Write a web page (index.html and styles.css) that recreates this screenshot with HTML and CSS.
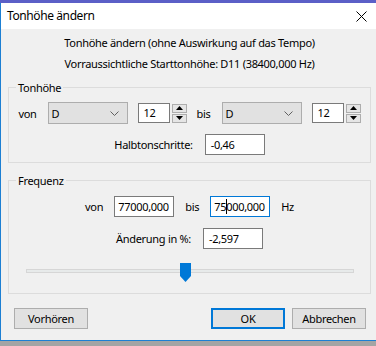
FILE: index.html
```html
<!DOCTYPE html>
<html>
<head>
<meta charset="utf-8">
<link rel="stylesheet" href="styles.css">
</head>
<body>
<div class="strip"></div>
<div class="dialog">
  <div class="titlebar">
    <span class="title">Tonhöhe ändern</span>
    <svg class="close" width="11" height="11" viewBox="0 0 11 11"><path d="M0.5 0.5 L10.5 10.5 M10.5 0.5 L0.5 10.5" stroke="#000" stroke-width="1" fill="none"/></svg>
  </div>
  <div class="content">
    <div class="info">
      <div>Tonhöhe ändern (ohne Auswirkung auf das Tempo)</div>
      <div>Vorraussichtliche Starttonhöhe: D11 (38400,000 Hz)</div>
    </div>
    <div class="group g-pitch">
      <span class="legend">Tonhöhe</span>
      <div class="row row-pitch">
        <span class="lbl lbl-von">von</span>
        <div class="combo"><span>D</span><svg width="9" height="5" viewBox="0 0 9 5"><path d="M0.5 0.5 L4.5 4.5 L8.5 0.5" stroke="#606060" fill="none"/></svg></div>
        <div class="spin-input">12</div>
        <div class="spin-btns">
          <div class="sbtn"><svg width="7" height="4" viewBox="0 0 7 4"><path d="M3.5 0 L7 4 L0 4 Z" fill="#000"/></svg></div>
          <div class="sbtn"><svg width="7" height="4" viewBox="0 0 7 4"><path d="M0 0 L7 0 L3.5 4 Z" fill="#000"/></svg></div>
        </div>
        <span class="lbl lbl-bis">bis</span>
        <div class="combo"><span>D</span><svg width="9" height="5" viewBox="0 0 9 5"><path d="M0.5 0.5 L4.5 4.5 L8.5 0.5" stroke="#606060" fill="none"/></svg></div>
        <div class="spin-input">12</div>
        <div class="spin-btns">
          <div class="sbtn"><svg width="7" height="4" viewBox="0 0 7 4"><path d="M3.5 0 L7 4 L0 4 Z" fill="#000"/></svg></div>
          <div class="sbtn"><svg width="7" height="4" viewBox="0 0 7 4"><path d="M0 0 L7 0 L3.5 4 Z" fill="#000"/></svg></div>
        </div>
      </div>
      <div class="row row-semi">
        <span class="lbl">Halbtonschritte:</span>
        <div class="textbox">-0,46</div>
      </div>
    </div>
    <div class="group g-freq">
      <span class="legend">Frequenz</span>
      <div class="row row-freq">
        <span class="lbl">von</span>
        <div class="textbox tb-freq">77000,000</div>
        <span class="lbl">bis</span>
        <div class="textbox tb-freq focused">75<span class="caret"></span>000,000</div>
        <span class="lbl">Hz</span>
      </div>
      <div class="row row-pct">
        <span class="lbl">Änderung in %:</span>
        <div class="textbox">-2,597</div>
      </div>
      <div class="slider">
        <div class="track"></div>
        <svg class="thumb" width="11" height="19" viewBox="0 0 11 19"><path d="M0 0 H11 V13 L5.5 19 L0 13 Z" fill="#0078d7"/></svg>
      </div>
    </div>
    <div class="buttons">
      <div class="btn">Vorhören</div>
      <div class="spacer"></div>
      <div class="btn btn-default">OK</div>
      <div class="btn">Abbrechen</div>
    </div>
  </div>
</div>
</body>
</html>
```
FILE: styles.css
```css
html, body {
  margin: 0;
  padding: 0;
  width: 376px;
  height: 346px;
  overflow: hidden;
  background: #a4a4a4;
}
body {
  font-family: "Noto Sans", "Open Sans", sans-serif;
  font-size: 11px;
  letter-spacing: -0.3px;
  color: #000;
}
.strip {
  height: 3px;
  background: #5b5fc7;
}
.dialog {
  width: 377px;
  border-left: 1px solid #1c7fd3;
  border-bottom: 1px solid #1c7fd3;
  background: #f0f0f0;
}
.titlebar {
  height: 26px;
  background: #fff;
  display: flex;
  align-items: center;
  position: relative;
}
.title {
  font-size: 12px;
  letter-spacing: -0.4px;
  margin-left: 6px;
  line-height: 26px;
}
.close {
  position: absolute;
  left: 355px;
  top: 8px;
}
.content {
  height: 311px;
  display: flex;
  flex-direction: column;
}
.info {
  padding-top: 3px;
  text-align: center;
  line-height: 21px;
}
.group {
  position: relative;
  margin: 0 7px;
  border: 1px solid #dcdcdc;
  display: flex;
  flex-direction: column;
}
.g-pitch {
  margin-top: 13px;
  padding: 14px 0 7px;
}
.g-freq {
  margin-top: 17px;
  padding: 15px 0 11px;
}
.legend {
  position: absolute;
  top: -8px;
  left: 7px;
  padding: 0 2px;
  line-height: 15px;
  background: #f0f0f0;
}
.row {
  display: flex;
  align-items: center;
  justify-content: center;
}
.row-pitch { height: 22px; }
.row-semi { height: 21px; margin-top: 10px; gap: 12px; }
.row-freq { height: 21px; gap: 11px; }
.row-pct { height: 21px; margin-top: 11px; gap: 12px; }
.lbl-von { margin-right: 11px; }
.lbl-bis { margin-left: 10px; margin-right: 11px; }
.combo {
  box-sizing: border-box;
  width: 80px;
  height: 22px;
  background: #e1e1e1;
  border: 1px solid #adadad;
  display: flex;
  align-items: center;
  justify-content: space-between;
  padding: 0 8px 0 3px;
  margin-right: 10px;
}
.combo svg { display: block; }
.spin-input {
  box-sizing: border-box;
  width: 32px;
  height: 20px;
  background: #fff;
  border: 1px solid #7a7a7a;
  padding-left: 5px;
  line-height: 18px;
  margin-right: 2px;
}
.spin-btns {
  display: flex;
  flex-direction: column;
  gap: 1px;
}
.sbtn {
  box-sizing: border-box;
  width: 15px;
  height: 9px;
  border: 1px solid #adadad;
  background: #e5e5e5;
  display: flex;
  align-items: center;
  justify-content: center;
}
.sbtn svg { display: block; }
.textbox {
  box-sizing: border-box;
  width: 60px;
  height: 21px;
  background: #fff;
  border: 1px solid #7a7a7a;
  padding-left: 5px;
  line-height: 19px;
  white-space: nowrap;
  overflow: hidden;
}
.tb-freq { padding-left: 3px; }
.focused { border-color: #0078d7; }
.caret {
  display: inline-block;
  width: 1px;
  height: 15px;
  background: #000;
  vertical-align: -3px;
  margin-right: -1px;
}
.slider {
  position: relative;
  height: 19px;
  margin: 14px 16px 0 17px;
}
.track {
  margin-top: 6px;
  height: 2px;
  border: 1px solid #d6d6d6;
  background: #e7eaea;
}
.thumb {
  position: absolute;
  top: 0;
  left: 154px;
}
.buttons {
  display: flex;
  gap: 7px;
  margin-top: 14px;
  padding: 0 12px 0 13px;
}
.spacer { flex: 1; }
.btn {
  box-sizing: border-box;
  width: 74px;
  height: 21px;
  background: #e1e1e1;
  border: 1px solid #adadad;
  text-align: center;
  line-height: 19px;
}
.btn-default {
  border: 2px solid #0078d7;
  line-height: 17px;
}
```
